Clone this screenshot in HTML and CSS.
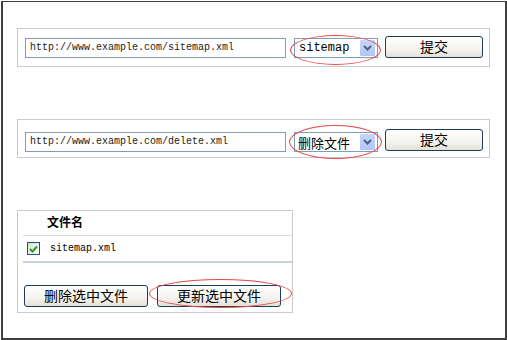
FILE: index.html
```html
<!DOCTYPE html>
<html>
<head>
<meta charset="utf-8">
<link rel="stylesheet" href="styles.css">
</head>
<body>
<div class="frame">
  <div class="panel bar first">
    <div class="url">http://www.example.com/sitemap.xml</div>
    <div class="sel-wrap">
      <div class="sel"><span class="sel-text mono">sitemap</span><span class="arrow"><svg width="9" height="6" viewBox="0 0 9 6"><path d="M1 1 L4.5 4.5 L8 1" fill="none" stroke="#4d6185" stroke-width="2"/></svg></span></div>
      <div class="ring ring1"></div>
    </div>
    <div class="btn btn-submit">提交</div>
  </div>

  <div class="panel bar second">
    <div class="url">http://www.example.com/delete.xml</div>
    <div class="sel-wrap">
      <div class="sel"><span class="sel-text cjk">删除文件</span><span class="arrow"><svg width="9" height="6" viewBox="0 0 9 6"><path d="M1 1 L4.5 4.5 L8 1" fill="none" stroke="#4d6185" stroke-width="2"/></svg></span></div>
      <div class="ring ring2"></div>
    </div>
    <div class="btn btn-submit">提交</div>
  </div>

  <div class="panel files">
    <div class="th">文件名</div>
    <div class="row">
      <span class="check"><svg width="9" height="8" viewBox="0 0 9 8"><path d="M1 4 L3.5 6.5 L8 1.5" fill="none" stroke="#21a121" stroke-width="2"/></svg></span>
      <span class="fname">sitemap.xml</span>
    </div>
    <div class="actions">
      <div class="btn btn-wide">删除选中文件</div>
      <div class="sel-wrap">
        <div class="btn btn-wide">更新选中文件</div>
        <div class="ring ring3"></div>
      </div>
    </div>
  </div>
</div>
</body>
</html>
```

FILE: styles.css
```css
html, body {
  margin: 0;
  padding: 0;
  background: #ffffff;
}
body {
  padding: 1px 0 0 1px;
  font-family: "Noto Sans CJK SC", "Liberation Sans", sans-serif;
}
.frame {
  box-sizing: border-box;
  width: 506px;
  height: 339px;
  border: 2px solid #3f3f3f;
  border-top-width: 1px;
  padding: 26px 0 0 14px;
}
.panel {
  box-sizing: border-box;
  border: 1px solid #c6cdcd;
  background: #fff;
}
.bar {
  width: 473px;
  height: 39px;
  display: flex;
  align-items: flex-end;
  padding: 0 0 8px 7px;
}
.second {
  margin-top: 52px;
  padding-bottom: 5px;
}
.url {
  box-sizing: border-box;
  width: 261px;
  height: 20px;
  border: 1px solid #7f9db9;
  font-family: "Liberation Mono", monospace;
  font-size: 10px;
  line-height: 18px;
  padding-left: 4px;
  color: #222;
}
.sel-wrap {
  position: relative;
}
.bar .sel-wrap {
  margin-left: 8px;
}
.sel {
  box-sizing: border-box;
  width: 84px;
  height: 20px;
  border: 1px solid #7f9db9;
  display: flex;
  align-items: center;
  justify-content: space-between;
  padding: 1px 2px 1px 4px;
}
.sel-text {
  color: #000;
}
.mono {
  font-family: "Liberation Mono", monospace;
  font-size: 12px;
}
.cjk {
  font-size: 13px;
  margin-left: -1px;
}
.arrow {
  width: 15px;
  height: 16px;
  background: linear-gradient(#c6d6fb, #b1c7f6);
  border-radius: 1px;
  display: flex;
  align-items: center;
  justify-content: center;
}
.ring {
  position: absolute;
  border: 1px solid #e8474a;
  border-radius: 50%;
  pointer-events: none;
}
.ring1 {
  left: -4px;
  top: -3px;
  width: 89px;
  height: 28px;
}
.ring2 {
  left: -5px;
  top: -7px;
  width: 91px;
  height: 32px;
}
.ring3 {
  left: -8px;
  top: -6px;
  width: 141px;
  height: 27px;
}
.btn {
  box-sizing: border-box;
  border: 1px solid #1c3c5c;
  border-radius: 3px;
  background: linear-gradient(#ffffff 0%, #f4f3ee 60%, #e4e2d6 100%);
  font-size: 14px;
  line-height: 19px;
  text-align: center;
  color: #000;
}
.btn-submit {
  width: 98px;
  height: 22px;
  margin-left: 7px;
}
.second .btn-submit {
  margin-bottom: 1px;
}
.files {
  width: 276px;
  height: 103px;
  margin-top: 52px;
  padding: 0 0 0 5px;
}
.th {
  height: 24px;
  border-bottom: 1px solid #d4dae4;
  font-size: 12px;
  font-weight: bold;
  line-height: 22px;
  padding-left: 24px;
}
.row {
  height: 25px;
  border-bottom: 2px solid #c9d1e0;
  display: flex;
  align-items: center;
  padding-left: 4px;
}
.check {
  box-sizing: border-box;
  width: 13px;
  height: 13px;
  border: 1px solid #1c5180;
  background: linear-gradient(135deg, #dcdcd7, #ffffff);
  display: flex;
  align-items: center;
  justify-content: center;
}
.fname {
  font-family: "Liberation Mono", monospace;
  font-size: 10px;
  margin-left: 10px;
}
.actions {
  display: flex;
  gap: 9px;
  margin-top: 22px;
  padding-left: 1px;
}
.btn-wide {
  width: 124px;
  height: 22px;
}
```
